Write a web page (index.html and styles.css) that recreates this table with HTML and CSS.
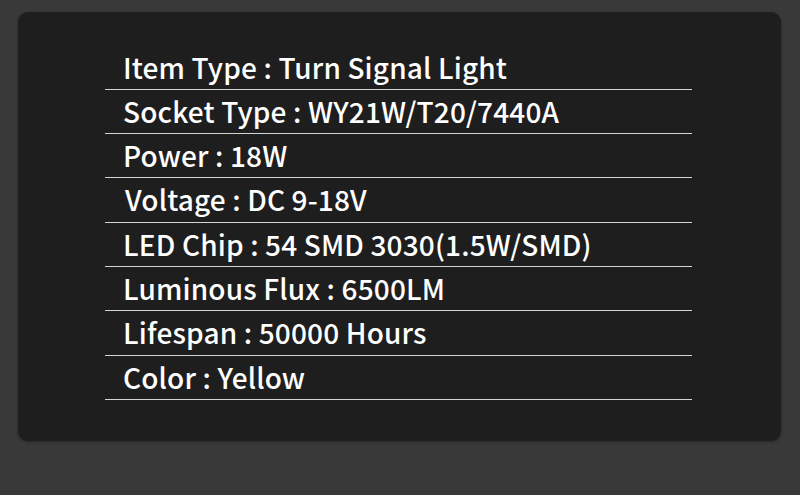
FILE: index.html
```html
<!DOCTYPE html>
<html>
<head>
<meta charset="utf-8">
<link rel="stylesheet" href="styles.css">
</head>
<body>
<div class="card">
  <ul class="specs">
    <li class="row">Item Type : Turn Signal Light</li>
    <li class="row">Socket Type : WY21W/T20/7440A</li>
    <li class="row">Power : 18W</li>
    <li class="row shift">Voltage : DC 9-18V</li>
    <li class="row">LED Chip : 54 SMD 3030(1.5W/SMD)</li>
    <li class="row">Luminous Flux : 6500LM</li>
    <li class="row">Lifespan : 50000 Hours</li>
    <li class="row">Color : Yellow</li>
  </ul>
</div>
</body>
</html>
```

FILE: styles.css
```css
html, body {
  margin: 0;
  padding: 0;
}
body {
  width: 800px;
  height: 495px;
  background: #393939;
  padding: 12px 19px 0 18px;
  box-sizing: border-box;
  font-family: "Noto Sans CJK SC", "Noto Sans", sans-serif;
}
.card {
  height: 429px;
  background: #1e1e1e;
  border-radius: 10px;
  box-shadow: 0 1px 3px rgba(0,0,0,0.35);
  padding: 33.5px 0 0 87px;
  box-sizing: border-box;
}
.specs {
  list-style: none;
  margin: 0;
  padding: 0;
  width: 587px;
}
.row {
  height: 43.3px;
  line-height: 43.3px;
  border-bottom: 1px solid #d4d4d4;
  color: #ffffff;
  font-size: 28px;
  font-weight: 500;
  letter-spacing: 0.15px;
  padding-left: 18px;
  white-space: nowrap;
}
.row.shift {
  padding-left: 20px;
}
```
